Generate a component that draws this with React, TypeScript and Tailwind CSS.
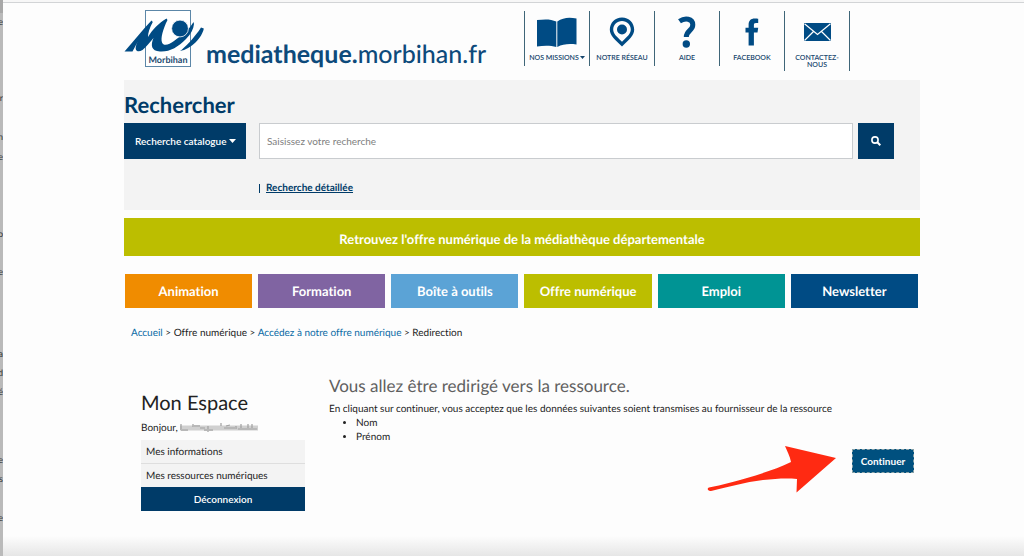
import type { ReactNode } from "react";

const sections = [
  { label: "Animation", tone: "bg-[#f08c00]" },
  { label: "Formation", tone: "bg-[#8064a2]" },
  { label: "Boîte à outils", tone: "bg-[#5ba3d6]" },
  { label: "Offre numérique", tone: "bg-[#bcbe00]" },
  { label: "Emploi", tone: "bg-[#009494]" },
  { label: "Newsletter", tone: "bg-[#004b84]" },
];

function MorbihanLogo() {
  return (
    <svg viewBox="0 0 80 58" className="h-[58px] w-20 shrink-0" role="img" aria-label="Morbihan">
      <rect x="21.500" y=".5" width="45" height="56" fill="#fff" stroke="#5c87a8" strokeWidth="1" />
      <path
        fill="#004b84"
        d="M.5 41.500 C10 31 18 20 27.500 10.500 L28.800 12 C25.500 18 24 23 24 27 C28 20 35 13 42.500 8.500 L43.500 10 C39 19 36.500 28 38 32.500 C39.500 36.500 45 35 50 31 C58 25 65 20 69.500 12 L70 14 C69.500 19 67 24 62 29 C54 37 46 42 36 41.500 C27 41 26.500 35 29.500 28 C26 32 22 37 18.500 40 C14.500 42.500 10.500 41.500 12 36 C12.500 34.500 13 33 14 31 C12.500 34 10.500 38 8.500 41.500 Z"
      />
      <path fill="#004b84" d="M56 41 C60 38.500 71 27 77 17.500 L79.800 18.500 C78.500 27 67 39.500 56 41 Z" />
      <circle cx="56" cy="18.500" r="8.400" fill="#004b84" stroke="#fff" strokeWidth=".8" />
      <text x="44" y="53" textAnchor="middle" fontFamily="Lato, sans-serif" fontSize="9" fontWeight="700" fill="#1d4a70">
        Morbihan
      </text>
    </svg>
  );
}

function BookIcon() {
  return (
    <svg viewBox="0 0 40 31" className="h-[31px] w-10" fill="#004b84" aria-hidden="true">
      <path d="M0 3 C8 2 14 2 19.300 4.500 V30 C14 28.500 7 28.500 0 29.500 Z" />
      <path d="M20.300 4.500 C26 .5 32 0 39.500 1.500 V27.500 C32 26.500 26 27 20.300 30 Z" />
    </svg>
  );
}

function PinIcon() {
  return (
    <svg viewBox="0 0 26 30" className="h-[30px] w-[26px]" fill="#004b84" aria-hidden="true">
      <path
        fillRule="evenodd"
        d="M13 .5 C6 .5 .8 6 .8 12.600 C.8 19 6 22.500 13 29.500 C20 22.500 25.200 19 25.200 12.600 C25.200 6 20 .5 13 .5 Z M13 4 C18 4 21.800 7.800 21.800 12.600 C21.800 17 18 19.800 13 24.800 C8 19.800 4.200 17 4.200 12.600 C4.200 7.800 8 4 13 4 Z"
      />
      <circle cx="13" cy="12.500" r="5" />
    </svg>
  );
}

function QuestionIcon() {
  return (
    <svg viewBox="0 0 18 32" className="h-8 w-[18px]" aria-hidden="true">
      <path d="M1.500 5.300 C7 1.500 14.800 2.500 14.800 8.800 C14.800 15 8.500 14 8.300 21" fill="none" stroke="#004b84" strokeWidth="5" />
      <circle cx="8.300" cy="28" r="3.700" fill="#004b84" />
    </svg>
  );
}

function FacebookIcon() {
  return (
    <svg viewBox="0 0 14 28" className="h-7 w-[14px]" fill="#004b84" aria-hidden="true">
      <path d="M3.600 27.500 V14.600 H.5 V9.800 H3.600 V6.800 C3.600 2.500 6 .5 9.600 .5 C11.400 .5 12.600 .6 13.200 .8 V5.100 H11 C9.200 5.100 8.900 6 8.900 7.300 V9.800 H13.200 L12.500 14.600 H8.900 V27.500 Z" />
    </svg>
  );
}

function MailIcon() {
  return (
    <svg viewBox="0 0 27 18" className="h-[18px] w-[27px]" aria-hidden="true">
      <rect width="27" height="18" fill="#004b84" />
      <path d="M.5 .8 L13.500 11.500 L26.500 .8 M.5 17.500 L9.500 8.500 M26.500 17.500 L17.500 8.500" fill="none" stroke="#fff" strokeWidth="1.200" />
    </svg>
  );
}

function TopLink({ icon, tall, children }: { icon: ReactNode; tall?: boolean; children: ReactNode }) {
  return (
    <li className={tall ? "h-[60px] w-[66px] border-x border-[#3f6678]" : "h-[55px] w-[65px] border-l border-[#3f6678]"}>
      <a href="#" className="flex flex-col items-center">
        <span className="flex h-[42px] items-center justify-center">{icon}</span>
        <span className="pt-[2px] text-center text-[7px] leading-[7px] font-semibold whitespace-nowrap text-[#17466d]">{children}</span>
      </a>
    </li>
  );
}

/* Sliver of the window lying behind the page. */
function BackWindow() {
  const marks: [string, string][] = [
    ["e", "top-[16px]"],
    ["r", "top-[92px]"],
    ["n", "top-[131px]"],
    ["e", "top-[151px]"],
    ["o", "top-[228px]"],
    ["e", "top-[266px]"],
    ["a", "top-[348px]"],
    ["d", "top-[367px]"],
    ["é", "top-[386px]"],
    ["e", "top-[454px]"],
    ["s", "top-[473px]"],
    ["e", "top-[512px]"],
  ];
  return (
    <div aria-hidden="true" className="relative w-[3px] shrink-0 overflow-hidden bg-[#bababa] text-[9px] leading-3 text-[#333]">
      <div className="h-[13px] bg-[#a8a8a8]" />
      {marks.map(([glyph, place]) => (
        <span key={place} className={`absolute right-0 ${place}`}>
          {glyph}
        </span>
      ))}
    </div>
  );
}

function MaskedName() {
  return (
    <svg viewBox="0 0 78 10" className="h-[10px] w-[78px]" role="img" aria-label="Nom masqué">
      <rect x="0" y="2.500" width="78" height="5" fill="#d0d0d0" />
      <path d="M1 1V7M13 1V4M20 5H25M28 3V9M41 0V3M46 3L50 2M56 3V6M61 1V5M68 1V6M72 1V6" stroke="#a0a0a0" strokeWidth="1.200" />
      <path d="M1 7H8M13 3H20M24 7H33M44 5H56M58 6H77" stroke="#b8b8b8" strokeWidth="2" />
    </svg>
  );
}

export default function App() {
  return (
    <div className="flex min-h-screen bg-[#fdfdfd] font-['Lato',sans-serif] text-[10px] leading-[14px] font-normal text-[#222] [font-variant-ligatures:none] [text-rendering:geometricPrecision]">
      <BackWindow />
      <div className="flex min-w-0 flex-1 flex-col">
        <div className="h-[3px] border-b border-[#d2d4d6] bg-[#f7f7f7]" />
        <div className="flex-1 pr-[104px] pl-[121px]">
          <header className="flex h-[77px] items-start justify-between pt-[7px] pr-[70px]">
            <a href="#" className="flex items-start text-[#0d4a7b]">
              <MorbihanLogo />
              <span className="pt-[28px] pl-[2px] text-[25px] leading-8 whitespace-nowrap">
                <b>mediatheque.</b>
                <span className="font-medium">morbihan.fr</span>
              </span>
            </a>
            <nav aria-label="Liens rapides" className="pt-px">
              <ul className="flex">
                <TopLink icon={<BookIcon />}>
                  NOS MISSIONS
                  <svg viewBox="0 0 5 3" className="mb-[2px] ml-px inline h-[3px] w-[5px]" aria-hidden="true">
                    <path d="M0 0H5L2.500 3Z" fill="#17466d" />
                  </svg>
                </TopLink>
                <TopLink icon={<PinIcon />}>NOTRE RÉSEAU</TopLink>
                <TopLink icon={<QuestionIcon />}>AIDE</TopLink>
                <TopLink icon={<FacebookIcon />}>FACEBOOK</TopLink>
                <TopLink icon={<MailIcon />} tall>
                  CONTACTEZ-
                  <br />
                  NOUS
                </TopLink>
              </ul>
            </nav>
          </header>

          <main>
            <form className="h-[130px] bg-[#f3f3f3] pt-3 pr-[26px]" onSubmit={(e) => e.preventDefault()}>
              <h1 className="text-[22px] leading-[26px] font-bold text-[#003b68]">Rechercher</h1>
              <div className="mt-[5px] flex h-9">
                <div className="relative mr-[13px] w-[122px] shrink-0">
                  <label htmlFor="scope" className="sr-only">
                    Type de recherche
                  </label>
                  <select id="scope" className="h-full w-full appearance-none bg-[#003b68] pl-[11px] text-[10px] font-semibold text-white">
                    <option>Recherche catalogue</option>
                  </select>
                  <svg viewBox="0 0 7 4" className="pointer-events-none absolute top-4 right-[10px] h-1 w-[7px]" aria-hidden="true">
                    <path d="M0 0H7L3.500 4Z" fill="#fff" />
                  </svg>
                </div>
                <input
                  type="text"
                  aria-label="Saisissez votre recherche"
                  placeholder="Saisissez votre recherche"
                  className="min-w-0 flex-1 border border-[#c9cccf] bg-white px-[7px] text-[10px] placeholder:text-[#808080]"
                />
                <button type="submit" aria-label="Rechercher" className="ml-[5px] flex w-9 shrink-0 items-center justify-center bg-[#003b68]">
                  <svg viewBox="0 0 10 10" className="size-[10px]" fill="none" stroke="#fff" aria-hidden="true">
                    <circle cx="4" cy="4" r="3.100" strokeWidth="1.600" />
                    <path d="M6.300 6.300L9.300 9.300" strokeWidth="2" />
                  </svg>
                </button>
              </div>
              <div className="mt-[22px] flex items-center pl-[135px]">
                <span className="mr-[6px] h-[9px] w-px bg-[#003b68]" />
                <a href="#" className="text-[10px] font-bold text-[#003b68] underline">
                  Recherche détaillée
                </a>
              </div>
            </form>

            <a href="#" className="mt-2 flex h-[38px] items-center justify-center bg-[#bcbe00] pt-1 text-[13px] font-bold text-white">
              Retrouvez l'offre numérique de la médiathèque départementale
            </a>

            <nav aria-label="Rubriques" className="mt-[18px] grid grid-cols-6 gap-[6px] pr-[2px] pl-px">
              {sections.map((s) => (
                <a key={s.label} href="#" className={`flex h-[34px] items-center justify-center text-[13px] font-bold text-white ${s.tone}`}>
                  {s.label}
                </a>
              ))}
            </nav>

            <nav aria-label="Fil d'Ariane" className="mt-[18px] pl-[7px]">
              <a href="#" className="text-[#0b6ba5]">Accueil</a> &gt; Offre numérique &gt;{" "}
              <a href="#" className="text-[#0b6ba5]">Accédez à notre offre numérique</a> &gt; Redirection
            </nav>

            <div className="flex items-start gap-6 pt-9 pl-[17px]">
              <aside className="w-[164px] shrink-0 pt-[14px]">
                <h2 className="text-[20px] leading-[26px]">Mon Espace</h2>
                <p className="mt-[5px] flex items-center gap-[2px]">
                  Bonjour, <MaskedName />
                </p>
                <ul className="mt-[5px] bg-[#f3f3f3]">
                  <li className="border-b border-[#dedede]">
                    <a href="#" className="block px-[5px] pt-[5px] pb-1">Mes informations</a>
                  </li>
                  <li>
                    <a href="#" className="block px-[5px] pt-[5px] pb-1">Mes ressources numériques</a>
                  </li>
                </ul>
                <button type="button" className="h-6 w-full bg-[#003b68] font-semibold text-white">
                  Déconnexion
                </button>
              </aside>

              <section className="min-w-0 flex-1">
                <h2 className="text-[17px] leading-5 text-[#606060]">Vous allez être redirigé vers la ressource.</h2>
                <p className="mt-[6px]">
                  En cliquant sur continuer, vous acceptez que les données suivantes soient transmises au fournisseur de la ressource
                </p>
                <ul className="list-disc pl-[27px]">
                  <li>Nom</li>
                  <li>Prénom</li>
                </ul>
                <div className="flex items-start justify-end pr-[6px]">
                  <svg viewBox="0 0 130 50" className="mr-[15px] h-[50px] w-[130px]" aria-hidden="true">
                    <path
                      d="M2 43.500 C15 41 29 37 40 34 C56 29 70 25 84 18 C83 12 80 7 78 2 L129 14 L89.500 48.500 L90 35 C78 34 68 35 56 36 C38 38 20 43.500 4 47 C1 47.500 -.5 44.500 2 43.500 Z"
                      fill="#ff2a12"
                    />
                  </svg>
                  <button type="button" className="mt-[5px] h-6 w-[62px] border border-dashed border-[#8aa3a8] bg-[#00507f] font-bold text-white">
                    Continuer
                  </button>
                </div>
              </section>
            </div>
          </main>
        </div>
        <div className="h-5 bg-linear-to-b from-[#fdfdfd] to-[#e6e6e6]" />
      </div>
    </div>
  );
}
